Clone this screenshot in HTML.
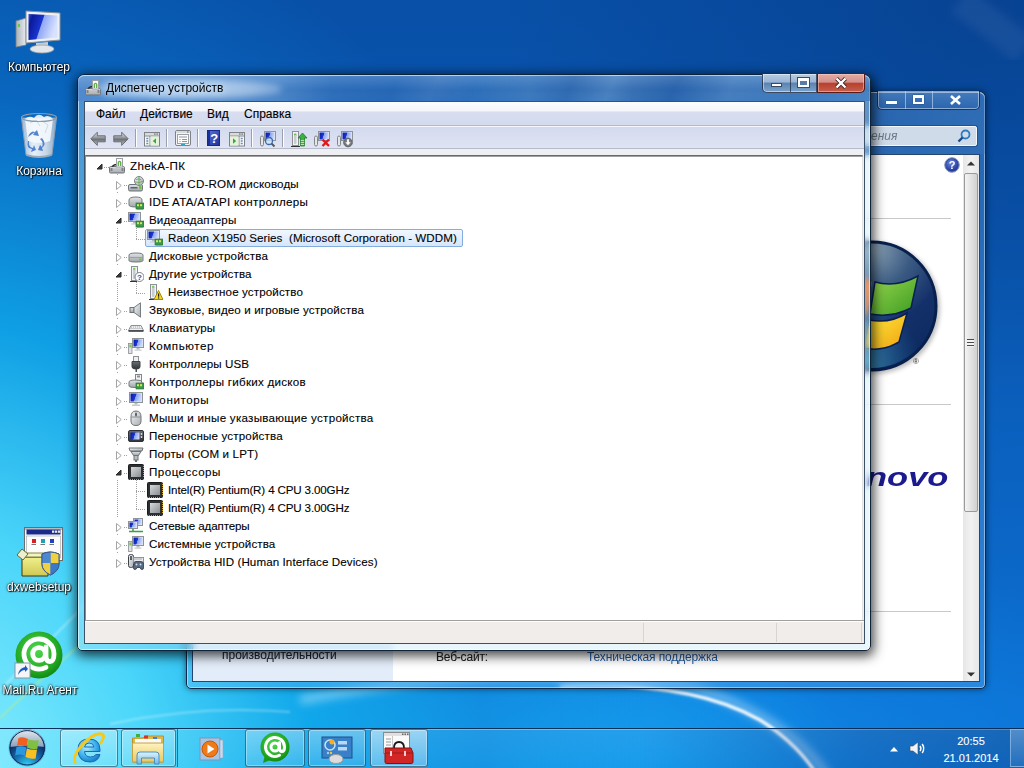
<!DOCTYPE html>
<html><head><meta charset="utf-8">
<style>
*{box-sizing:border-box;margin:0;padding:0}
html,body{width:1024px;height:768px;overflow:hidden}
body{position:relative;font-family:"Liberation Sans",sans-serif;font-size:12px;color:#000;background:#0a5ab8;}
.abs{position:absolute}
.ic{position:absolute;overflow:visible}
#bg{position:absolute;left:0;top:0;width:1024px;height:768px;
background:
 radial-gradient(ellipse 720px 960px at -60px 820px, rgba(150,242,255,1) 0%, rgba(75,215,250,0.98) 30%, rgba(15,168,234,0.88) 52%, rgba(10,125,212,0.45) 76%, rgba(10,110,210,0) 100%),
 radial-gradient(ellipse 600px 200px at 250px 740px, rgba(40,185,245,0.6) 0%, rgba(20,160,235,0) 100%),
 radial-gradient(ellipse 700px 260px at 520px 768px, rgba(15,160,242,0.95) 0%, rgba(15,135,230,0.6) 50%, rgba(20,110,220,0) 100%),
 radial-gradient(ellipse 500px 400px at 1000px 0px, rgba(6,50,120,0.45) 0%, rgba(6,50,120,0) 100%),
 linear-gradient(180deg,#0850a8 0%,#0956b0 30%,#0b62c0 60%,#0c72d6 100%);}
.dicon{position:absolute;width:80px;text-align:center;color:#fff;font-size:12px;line-height:14px;text-shadow:1px 1px 1px rgba(0,0,0,.9),0 0 2px #000,0 0 3px rgba(0,0,0,.6)}
.win{position:absolute}
.tt{position:absolute;font-size:11.6px;line-height:18px;white-space:nowrap;color:#000;-webkit-text-stroke:0.1px #000}
.menu{position:absolute;top:105px;font-size:12px;line-height:18px;color:#000;-webkit-text-stroke:0.1px #000}
.sel{position:absolute;border:1px solid #84acdd;border-radius:2px;background:linear-gradient(180deg,#f1f7fe 0%,#d5e6fb 100%)}
.hd{position:absolute;height:1px;background-image:linear-gradient(90deg,#a0a0a0 50%,transparent 50%);background-size:2px 1px}
.vd{position:absolute;width:1px;background-image:linear-gradient(180deg,#a0a0a0 50%,transparent 50%);background-size:1px 2px}
.tsep{position:absolute;top:129px;width:1px;height:18px;background:#9aa1ad;box-shadow:1px 0 0 #fff}
.tb{position:absolute;top:729px;height:38px;border:1px solid rgba(0,25,50,.5);border-radius:3px;background:linear-gradient(180deg,rgba(255,255,255,.32),rgba(255,255,255,.12));box-shadow:inset 0 0 0 1px rgba(255,255,255,.35)}
.tbtn{position:absolute;border:1px solid rgba(20,30,50,.75);border-top:none;box-shadow:inset 0 0 0 1px rgba(255,255,255,.45)}
</style></head>
<body>
<svg width="0" height="0" style="position:absolute"><defs>
<linearGradient id="gGray" x1="0" y1="0" x2="0" y2="1"><stop offset="0" stop-color="#e2e5e8"/><stop offset="1" stop-color="#9ea4a8"/></linearGradient>
<linearGradient id="gGray2" x1="0" y1="0" x2="1" y2="1"><stop offset="0" stop-color="#f4f5f6"/><stop offset="1" stop-color="#a8aeb2"/></linearGradient>
<linearGradient id="gDark" x1="0" y1="0" x2="0" y2="1"><stop offset="0" stop-color="#6a6f74"/><stop offset="1" stop-color="#2e3236"/></linearGradient>
<linearGradient id="gScreen" x1="0" y1="0" x2="1" y2="0.25"><stop offset="0" stop-color="#0a1a9a"/><stop offset="0.5" stop-color="#1838d8"/><stop offset="0.55" stop-color="#8aa0f0"/><stop offset="1" stop-color="#c8d6ff"/></linearGradient>
<linearGradient id="gCpu" x1="0" y1="0" x2="1" y2="1"><stop offset="0" stop-color="#d8dadc"/><stop offset="1" stop-color="#8a8e92"/></linearGradient>
<radialGradient id="gHelp" cx="0.4" cy="0.3" r="0.8"><stop offset="0" stop-color="#6a8ae0"/><stop offset="1" stop-color="#1a2a90"/></radialGradient>
<linearGradient id="gHelpSq" x1="0" y1="0" x2="1" y2="1"><stop offset="0" stop-color="#5a78d8"/><stop offset="1" stop-color="#1a2c98"/></linearGradient>
<linearGradient id="gArrow" x1="0" y1="0" x2="0" y2="1"><stop offset="0" stop-color="#e0e2e4"/><stop offset="0.35" stop-color="#a4a8ac"/><stop offset="0.55" stop-color="#6e7276"/><stop offset="1" stop-color="#c4c7ca"/></linearGradient>
</defs><symbol id="i-pc" viewBox="0 0 16 16"><rect x="0.5" y="8.5" width="15" height="6.5" rx="1.2" fill="url(#gGray)" stroke="#6f7478"/>
<rect x="2" y="10.5" width="12" height="2" fill="#b9bec2"/><rect x="1.5" y="10" width="2" height="3" fill="#7c8388"/><rect x="12.5" y="10" width="2" height="3" fill="#7c8388"/>
<path d="M3 8.5 Q7.5 4.5 12 8.5" fill="none" stroke="#2a2e33" stroke-width="1.3"/>
<rect x="7.5" y="0.5" width="6" height="8.5" fill="#fafafa" stroke="#9aa0a4"/><path d="M9.3 8 V4.3 Q10.5 2.3 11.7 4.3 V8" fill="none" stroke="#5ab040" stroke-width="1.3"/></symbol>
<symbol id="i-dvd" viewBox="0 0 16 16"><rect x="0.5" y="8.5" width="14" height="6.5" rx="1.5" fill="url(#gGray)" stroke="#6f7478"/>
<rect x="2.5" y="11" width="7" height="1.5" fill="#5b6166"/><rect x="11" y="10" width="2.5" height="3" fill="#6cc24a"/>
<circle cx="11" cy="5" r="4.5" fill="url(#gGray2)" stroke="#7b8287"/><path d="M8 3.5 Q11 2 13.5 4 M7 6 Q11 7 15 5.5 M11 0.8 V9" stroke="#5da64a" stroke-width="0.8" fill="none"/></symbol>
<symbol id="i-ide" viewBox="0 0 16 16"><path d="M1 6 Q1 3 8 3 Q14 3 14 6 V11 Q14 13 8 13 Q1 13 1 11 Z" fill="url(#gGray)" stroke="#747a7e"/>
<rect x="8" y="9" width="8" height="6" fill="#3b9a4a" stroke="#2a6a32" stroke-width="0.6"/><rect x="9" y="10.2" width="2" height="2" fill="#d9e65a"/><rect x="12" y="10.2" width="2" height="2" fill="#d9e65a"/><path d="M9 15.5H15" stroke="#c8a030"/></symbol>
<symbol id="i-video" viewBox="0 0 16 16"><rect x="0.5" y="0.5" width="12" height="9" fill="#e9ebee" stroke="#8d9397"/><rect x="1.5" y="1.5" width="10" height="7" fill="url(#gScreen)"/>
<rect x="5" y="10" width="3" height="1.5" fill="#b5babe"/><rect x="3" y="11.5" width="7" height="1" fill="#c6cacd"/>
<rect x="8" y="9" width="8" height="6" fill="#3b9a4a" stroke="#2a6a32" stroke-width="0.6"/><rect x="9" y="10.2" width="2" height="2" fill="#d9e65a"/><rect x="12" y="10.2" width="2" height="2" fill="#d9e65a"/><path d="M9 15.5H15" stroke="#c8a030"/></symbol>
<symbol id="i-disk" viewBox="0 0 16 16"><path d="M1 7 Q1 5 8 5 Q15 5 15 7 V12.5 Q15 14 8 14 Q1 14 1 12.5 Z" fill="url(#gGray)" stroke="#747a7e"/><path d="M2 9.5 H14" stroke="#9aa0a4"/><rect x="11" y="10.5" width="2.5" height="2" fill="#6cc24a"/></symbol>
<symbol id="i-other" viewBox="0 0 16 16"><rect x="3.5" y="0.5" width="6" height="14" fill="#f2f3f4" stroke="#8a9094"/><rect x="5" y="2" width="2.5" height="11" rx="1" fill="#c8ccd0"/><rect x="5.2" y="1.8" width="2" height="2" fill="#78c850"/><path d="M2 15.5H9" stroke="#333"/>
<circle cx="11.5" cy="11" r="4.5" fill="#fff" stroke="#7a8085"/><text x="11.5" y="14" font-size="8" font-weight="bold" text-anchor="middle" fill="#2a4aa8" font-family="Liberation Sans">?</text></symbol>
<symbol id="i-unknown" viewBox="0 0 16 16"><rect x="3.5" y="0.5" width="6" height="14" fill="#f2f3f4" stroke="#8a9094"/><rect x="5" y="2" width="2.5" height="11" rx="1" fill="#c8ccd0"/><rect x="5.2" y="1.8" width="2" height="2" fill="#78c850"/><path d="M2 15.5H9" stroke="#333"/>
<path d="M11.5 6.5 L16 15.5 H7 Z" fill="#f4d820" stroke="#a08a10" stroke-linejoin="round"/><rect x="11" y="9.5" width="1.2" height="3.2" fill="#222"/><rect x="11" y="13.4" width="1.2" height="1.2" fill="#222"/></symbol>
<symbol id="i-sound" viewBox="0 0 16 16"><rect x="2" y="5.5" width="4" height="5" fill="url(#gGray)" stroke="#6d7378"/><path d="M6 5.5 L12.5 0.8 V15.2 L6 10.5 Z" fill="url(#gGray2)" stroke="#777d82"/></symbol>
<symbol id="i-kbd" viewBox="0 0 16 16"><path d="M0.5 10.5 L3 5.5 H13 L15.5 10.5 Z" fill="#eef0f2" stroke="#8a9094"/><path d="M3 7 H13 M2.5 8.5 H13.5" stroke="#a0a6aa" stroke-dasharray="1 1"/><path d="M0.5 11 H15.5" stroke="#3a3e42" stroke-width="1.6"/></symbol>
<symbol id="i-comp" viewBox="0 0 16 16"><rect x="4.5" y="0.5" width="11" height="9" fill="#e9ebee" stroke="#8d9397"/><rect x="5.5" y="1.5" width="9" height="7" fill="url(#gScreen)"/>
<rect x="8.5" y="10" width="3" height="1.5" fill="#b5babe"/><rect x="6.5" y="11.5" width="7" height="1.2" fill="#c6cacd"/>
<rect x="0.5" y="5.5" width="3.5" height="10" fill="#dfe2e4" stroke="#8a9094" stroke-width="0.8"/><rect x="1.3" y="6.5" width="2" height="3" fill="#78c850"/></symbol>
<symbol id="i-usb" viewBox="0 0 16 16"><rect x="5.5" y="0.5" width="5" height="5" fill="#f0f0f0" stroke="#8a9094"/><path d="M4 5.5 H12 V11 Q12 13 8 13 Q4 13 4 11 Z" fill="url(#gDark)" stroke="#3e4246"/><rect x="7.5" y="13" width="1.5" height="3" fill="#4a4e52"/></symbol>
<symbol id="i-floppy" viewBox="0 0 16 16"><rect x="7.5" y="0.5" width="6" height="6" fill="#f4f4f4" stroke="#80868a"/><rect x="9" y="1.5" width="3" height="2" fill="#8a9094"/>
<path d="M1 8 Q1 6 8 6 Q14 6 14 8 V12 Q14 13.5 8 13.5 Q1 13.5 1 12 Z" fill="url(#gGray)" stroke="#747a7e"/>
<rect x="8" y="9" width="8" height="6" fill="#3b9a4a" stroke="#2a6a32" stroke-width="0.6"/><rect x="9" y="10.2" width="2" height="2" fill="#d9e65a"/><rect x="12" y="10.2" width="2" height="2" fill="#d9e65a"/></symbol>
<symbol id="i-monitor" viewBox="0 0 16 16"><rect x="1.5" y="0.5" width="13" height="10" fill="#e9ebee" stroke="#8d9397"/><rect x="2.5" y="1.5" width="11" height="8" fill="url(#gScreen)"/>
<rect x="6.5" y="11" width="3" height="1.5" fill="#b5babe"/><rect x="4" y="12.5" width="8" height="1.5" fill="#c6cacd"/></symbol>
<symbol id="i-mouse" viewBox="0 0 16 16"><path d="M8 1 Q13 1 13 7 V11 Q13 15.5 8 15.5 Q3 15.5 3 11 V7 Q3 1 8 1Z" fill="url(#gGray2)" stroke="#6f7478"/><path d="M8 1.5 V7 M3.5 7 H12.5" stroke="#7a8085" stroke-width="0.8"/><rect x="7" y="3" width="2" height="3" rx="1" fill="#5a6064"/></symbol>
<symbol id="i-portable" viewBox="0 0 16 16"><rect x="0.5" y="2.5" width="15" height="11" rx="1.5" fill="url(#gDark)" stroke="#2e3236"/><rect x="2.5" y="4.5" width="9" height="7" fill="url(#gScreen)"/><circle cx="13.5" cy="6" r="0.9" fill="#ddd"/><circle cx="13.5" cy="9" r="0.9" fill="#ddd"/></symbol>
<symbol id="i-ports" viewBox="0 0 16 16"><path d="M1 2 H15 L14 5 H2 Z" fill="url(#gGray2)" stroke="#6f7478"/><path d="M3 5.5 H13 L10.5 9.5 H5.5 Z" fill="url(#gGray)" stroke="#6f7478"/><rect x="6" y="9.5" width="4" height="4.5" fill="#b9bec2" stroke="#6f7478"/><rect x="7" y="14" width="2" height="2" fill="#6f7478"/></symbol>
<symbol id="i-cpu" viewBox="0 0 16 16"><rect x="0.5" y="0.5" width="15" height="15" rx="1" fill="#2d3033" stroke="#1a1c1e"/><rect x="3" y="3" width="10" height="10" fill="url(#gCpu)"/><path d="M15.5 2 V14 M2 15.5 H14" stroke="#d4a030" stroke-dasharray="1 1"/></symbol>
<symbol id="i-net" viewBox="0 0 16 16"><rect x="5.5" y="0.5" width="9" height="7" fill="#e9ebee" stroke="#8d9397"/><rect x="6.5" y="1.5" width="7" height="5" fill="url(#gScreen)"/>
<rect x="0.5" y="3.5" width="9" height="7" fill="#e9ebee" stroke="#8d9397"/><rect x="1.5" y="4.5" width="7" height="5" fill="url(#gScreen)"/>
<path d="M5 11 V13 M1 13.5 H15" stroke="#3aa040" stroke-width="1.5"/></symbol>
<symbol id="i-hid" viewBox="0 0 16 16"><rect x="0.5" y="0.5" width="5" height="13" rx="2" fill="url(#gGray2)" stroke="#3e4246"/><rect x="2" y="2" width="2" height="4" fill="#5a6064"/>
<rect x="5.5" y="3.5" width="10" height="6" fill="#e9ebee" stroke="#8d9397"/><path d="M6.5 5 H14.5" stroke="#6a7074" stroke-dasharray="1 1"/><path d="M6 9 Q6 7.5 8 7.5 H13 Q15.5 7.5 15.5 10 V14 Q15.5 15.5 14 15.5 Q12.5 15.5 12 13.5 H9 Q8.5 15.5 7 15.5 Q5.5 15.5 5.5 14Z" fill="#5a6a80" stroke="#2e3a4a" stroke-width="0.8"/><circle cx="8.5" cy="10.5" r="1" fill="#cfe0f0"/><circle cx="12.5" cy="10.5" r="1" fill="#cfe0f0"/></symbol></svg>
<div id="bg"></div>
<svg class="abs" style="left:0;top:0" width="1024" height="768" viewBox="0 0 1024 768">
 <defs><filter id="fb1" x="-20%" y="-20%" width="140%" height="140%"><feGaussianBlur stdDeviation="1.2"/></filter>
 <filter id="fb3" x="-20%" y="-20%" width="140%" height="140%"><feGaussianBlur stdDeviation="4"/></filter></defs>
 <path d="M300 700 Q560 650 700 690 Q790 720 830 780" fill="none" stroke="rgba(255,255,255,.35)" stroke-width="10" filter="url(#fb3)"/>
 <path d="M560 686 Q690 680 760 720 Q800 745 820 780" fill="none" stroke="rgba(255,255,255,.9)" stroke-width="3.5" filter="url(#fb1)"/>
 <path d="M0 690 Q40 650 90 600" fill="none" stroke="rgba(255,255,255,.35)" stroke-width="2" filter="url(#fb1)"/>
 <path d="M0 718 Q40 680 85 640" fill="none" stroke="rgba(190,240,120,.7)" stroke-width="1.5" filter="url(#fb1)"/>
 <path d="M110 724 Q200 705 290 712" fill="none" stroke="rgba(255,255,255,.3)" stroke-width="2" filter="url(#fb1)"/>
 <path d="M960 0 Q1000 30 1024 50" fill="none" stroke="rgba(255,255,255,.06)" stroke-width="30" filter="url(#fb3)"/>
</svg>

<!-- ============ BACK WINDOW ============ -->
<div class="win" style="left:186px;top:91px;width:800px;height:598px;border:1px solid #10284a;border-radius:7px 7px 5px 5px;
 background:rgba(130,190,245,.26);backdrop-filter:blur(4px);box-shadow:0 0 6px rgba(0,0,0,.55),inset 0 0 0 1px rgba(255,255,255,.45)"></div>
<div class="abs" style="left:187px;top:92px;width:798px;height:62px;border-radius:6px 6px 0 0;
 background:linear-gradient(100deg,rgba(30,80,150,.55) 0%,rgba(40,95,165,.45) 40%,rgba(70,130,200,.35) 55%,rgba(35,90,160,.5) 75%,rgba(60,120,190,.4) 100%);box-shadow:inset 0 1px 0 rgba(255,255,255,.5)"></div>
<!-- back title buttons -->
<div class="tbtn" style="left:877px;top:91px;width:103px;height:19px;border-radius:0 0 5px 5px;background:linear-gradient(180deg,rgba(120,160,210,.35),rgba(40,90,160,.3))"></div>
<div class="abs" style="left:905px;top:91px;width:1px;height:18px;background:rgba(200,220,245,.6)"></div>
<div class="abs" style="left:932px;top:91px;width:1px;height:18px;background:rgba(200,220,245,.6)"></div>
<div class="abs" style="left:886px;top:101px;width:11px;height:3px;background:#fff;box-shadow:0 0 1px #123"></div>
<div class="abs" style="left:913px;top:95px;width:11px;height:9px;border:2px solid #fff;border-top-width:3px;box-shadow:0 0 1px #123"></div>
<svg class="ic" style="left:949px;top:95px" width="13" height="10" viewBox="0 0 13 10"><path d="M2 1 L11 9 M11 1 L2 9" stroke="#fff" stroke-width="2.6"/></svg>
<!-- back search -->
<div class="abs" style="left:700px;top:126px;width:277px;height:20px;border:1px solid #f4f8fc;border-radius:2px;background:#cfdbe9;box-shadow:0 0 0 1px rgba(20,50,100,.45)"></div>
<div class="abs" style="left:871px;top:128px;font-style:italic;color:#6d7b8a;font-size:12px;line-height:16px">ения</div>
<svg class="ic" style="left:957px;top:129px" width="14" height="14" viewBox="0 0 14 14"><circle cx="8.5" cy="5.5" r="4" fill="none" stroke="#2c7cc0" stroke-width="1.8"/><path d="M5.5 8.5 L1.5 12.5" stroke="#1a4a8a" stroke-width="2.4"/></svg>
<!-- back client -->
<div class="abs" style="left:192px;top:154px;width:788px;height:528px;background:#fff;border:1px solid #264670"></div>
<div class="abs" style="left:193px;top:640px;width:200px;height:41px;background:#e3edf9"></div>
<div class="abs" style="left:222px;top:647px;font-size:12px;line-height:16px;color:#1a2238;-webkit-text-stroke:0.1px #1a2238">производительности</div>
<div class="abs" style="left:436px;top:649px;font-size:12px;line-height:16px;color:#1e1e1e;letter-spacing:-0.2px;-webkit-text-stroke:0.1px #1e1e1e">Веб-сайт:</div>
<div class="abs" style="left:587px;top:649px;font-size:12px;line-height:16px;color:#1e5aa2;letter-spacing:-0.14px">Техническая поддержка</div>
<div class="abs" style="left:860px;top:218px;width:91px;height:1px;background:#c8c8c8"></div>
<div class="abs" style="left:860px;top:404px;width:91px;height:1px;background:#c8c8c8"></div>
<div class="abs" style="left:860px;top:611px;width:91px;height:1px;background:#c8c8c8"></div>
<!-- help icon -->
<svg class="ic" style="left:944px;top:157px" width="16" height="16" viewBox="0 0 16 16"><circle cx="8" cy="8" r="7.3" fill="#2a48a8" stroke="#8a9ab8" stroke-width="1"/><circle cx="8" cy="8" r="6" fill="url(#gHelp)"/><text x="8" y="12.2" font-size="11" font-weight="bold" text-anchor="middle" fill="#fff" font-family="Liberation Sans">?</text></svg>
<!-- scrollbar -->
<div class="abs" style="left:963px;top:155px;width:16px;height:526px;background:linear-gradient(90deg,#e6e6e6,#f2f2f2 50%,#e6e6e6)"></div>
<div class="abs" style="left:964px;top:173px;width:14px;height:339px;border:1px solid #9a9a9a;border-radius:2px;background:linear-gradient(90deg,#f4f4f4 0%,#e2e2e2 50%,#d0d0d0 100%)"></div>
<svg class="ic" style="left:967px;top:161px" width="8" height="5" viewBox="0 0 8 5"><path d="M0 4.5 L4 0.5 L8 4.5Z" fill="#333"/></svg>
<svg class="ic" style="left:967px;top:672px" width="8" height="5" viewBox="0 0 8 5"><path d="M0 0.5 L4 4.5 L8 0.5Z" fill="#333"/></svg>
<div class="abs" style="left:967px;top:339px;width:7px;height:8px;background:repeating-linear-gradient(180deg,#4a4a4a 0 1.4px,#f4f4f4 1.4px 3px)"></div>
<!-- windows logo -->
<svg class="ic" style="left:800px;top:236px" width="145" height="140" viewBox="0 0 145 140">
 <defs><radialGradient id="gOrb" cx="0.5" cy="0.05" r="0.9"><stop offset="0" stop-color="#8aa2b4"/><stop offset="0.35" stop-color="#3a5a82"/><stop offset="0.65" stop-color="#14306a"/><stop offset="1" stop-color="#0c2a60"/></radialGradient>
 <radialGradient id="gOrb2" cx="0.3" cy="1" r="0.6"><stop offset="0" stop-color="#5ac0d8" stop-opacity=".95"/><stop offset="1" stop-color="#2a7ab0" stop-opacity="0"/></radialGradient>
 <linearGradient id="gGreen" x1="0" y1="0" x2="1" y2="1"><stop offset="0" stop-color="#9ad850"/><stop offset="1" stop-color="#3a9a20"/></linearGradient>
 <linearGradient id="gYel" x1="0" y1="0" x2="1" y2="1"><stop offset="0" stop-color="#fff040"/><stop offset="1" stop-color="#f0a010"/></linearGradient>
 <filter id="shd" x="-20%" y="-20%" width="140%" height="140%"><feGaussianBlur stdDeviation="2"/></filter></defs>
 <circle cx="74" cy="72" r="66" fill="rgba(0,0,0,.25)" filter="url(#shd)"/>
 <circle cx="72" cy="70" r="64" fill="url(#gOrb)" stroke="#08204e" stroke-width="3"/>
 <circle cx="72" cy="70" r="62" fill="url(#gOrb2)"/>
 <path d="M28 42 Q50 32 72 46 L67 80 Q48 68 24 76Z" fill="#f06a20"/>
 <path d="M75 46 Q96 52 118 40 L111 72 Q92 82 70 78 Z" fill="url(#gGreen)" stroke="#0a2050" stroke-width="1.5"/>
 <path d="M69 84 Q90 88 107 77 L99 106 Q82 116 64 112 Z" fill="url(#gYel)" stroke="#0a2050" stroke-width="1.5"/>
 <path d="M22 82 Q44 74 66 86 L60 114 Q40 104 18 112Z" fill="#2a8ad8"/>
 <text x="113" y="128" font-size="8" fill="#333" font-family="Liberation Sans">®</text>
</svg>
<div class="abs" style="left:866px;top:465px;font-family:'Liberation Sans';font-weight:bold;font-style:italic;font-size:25px;line-height:25px;color:#1b1a8e;transform:scaleX(1.38);transform-origin:0 0">novo</div>

<!-- ============ FRONT WINDOW ============ -->
<div class="win" style="left:77px;top:74px;width:794px;height:577px;border:1px solid #0e2238;border-radius:7px 7px 5px 5px;
 background:rgba(195,232,250,.36);backdrop-filter:blur(3px);box-shadow:1px 3px 12px 2px rgba(0,0,0,.72),inset 0 0 0 1px rgba(255,255,255,.6)"></div>
<div class="abs" style="left:78px;top:75px;width:792px;height:26px;border-radius:6px 6px 0 0;
 background:linear-gradient(180deg,rgba(255,255,255,.18) 0%,rgba(255,255,255,0) 60%),linear-gradient(90deg,rgba(80,135,205,.75) 0%,rgba(70,128,200,.72) 25%,rgba(30,98,182,.75) 32%,rgba(18,88,176,.8) 45%,rgba(50,120,195,.68) 57%,rgba(25,92,172,.78) 70%,rgba(60,122,195,.68) 100%);box-shadow:inset 0 1px 0 rgba(255,255,255,.55)"></div>
<div class="abs" style="left:78px;top:75px;width:792px;height:26px;border-radius:6px 6px 0 0;background:linear-gradient(112deg,rgba(0,0,0,0) 0%,rgba(0,0,0,0) 40%,rgba(255,255,255,.10) 45%,rgba(0,0,0,0) 50%,rgba(0,30,110,.14) 62%,rgba(255,255,255,.12) 67%,rgba(0,30,110,.12) 75%,rgba(255,255,255,.08) 82%,rgba(0,0,0,0) 90%)"></div>
<!-- title -->
<div class="abs" style="left:92px;top:78px;width:190px;height:22px;border-radius:50%;background:radial-gradient(ellipse at center,rgba(235,245,255,.75) 0%,rgba(220,235,250,.55) 50%,rgba(200,225,250,0) 100%);filter:blur(3px)"></div>
<svg class="ic" style="left:85px;top:80px" width="16" height="16" viewBox="0 0 16 16"><use href="#i-pc"/></svg>
<div class="abs" style="left:106px;top:81px;font-size:12px;line-height:14px;color:#000;text-shadow:0 0 6px #cfe2f4,0 0 10px #cfe2f4">Диспетчер устройств</div>
<!-- front buttons -->
<div class="tbtn" style="left:762px;top:74px;width:103px;height:19px;border-radius:0 0 5px 5px;background:linear-gradient(180deg,#b8cde4 0%,#9ab4d4 45%,#5a82b2 50%,#7aa4cc 100%)"></div>
<div class="abs" style="left:817px;top:74px;width:48px;height:19px;border:1px solid #5a1a18;border-top:none;border-radius:0 0 5px 0;background:linear-gradient(180deg,#e4aca4 0%,#d4908a 45%,#b8402e 52%,#c4604c 100%);box-shadow:inset 0 0 0 1px rgba(255,210,200,.5)"></div>
<div class="abs" style="left:790px;top:74px;width:1px;height:18px;background:rgba(30,40,60,.7)"></div>
<div class="abs" style="left:816px;top:74px;width:1px;height:18px;background:rgba(30,40,60,.7)"></div>
<div class="abs" style="left:771px;top:83px;width:11px;height:4px;background:#fff;border:1px solid #3a4a60"></div>
<div class="abs" style="left:798px;top:78px;width:11px;height:9px;background:#5a7aa8;border:2px solid #fff;border-top-width:3px;outline:1px solid #3a4a60"></div>
<svg class="ic" style="left:834px;top:77px" width="14" height="12" viewBox="0 0 14 12"><path d="M2.5 1.5 L11.5 10.5 M11.5 1.5 L2.5 10.5" stroke="#3a2020" stroke-width="4"/><path d="M2.5 1.5 L11.5 10.5 M11.5 1.5 L2.5 10.5" stroke="#fff" stroke-width="2.4"/></svg>

<!-- client -->
<div class="abs" style="left:84px;top:101px;width:781px;height:543px;background:#f0f0f0;border:1px solid #3c5068"></div>
<div class="abs" style="left:85px;top:102px;width:779px;height:24px;background:linear-gradient(180deg,#fbfcfd 0%,#f4f6fa 38%,#d8deef 44%,#d4dbee 100%);border-bottom:1px solid #b4bac8"></div>
<div class="menu" style="left:96px">Файл</div>
<div class="menu" style="left:140px">Действие</div>
<div class="menu" style="left:207px">Вид</div>
<div class="menu" style="left:244px">Справка</div>
<div class="abs" style="left:85px;top:126px;width:779px;height:23px;background:linear-gradient(180deg,#d4daee 0%,#dfe3f3 100%);border-top:1px solid #f4f6fa;border-bottom:1px solid #b4bac8"></div>
<div class="abs" style="left:85px;top:149px;width:779px;height:6px;background:#eeeff3"></div>
<!-- toolbar icons -->
<svg class="ic" style="left:90px;top:131px" width="16" height="16" viewBox="0 0 16 16"><path d="M0.8 7.8 L7.3 1.2 V4.8 H15.2 V10.8 H7.3 V14.4 Z" fill="url(#gArrow)" stroke="#6a6e72" stroke-linejoin="round"/></svg>
<svg class="ic" style="left:113px;top:131px" width="16" height="16" viewBox="0 0 16 16"><path d="M15.2 7.8 L8.7 1.2 V4.8 H0.8 V10.8 H8.7 V14.4 Z" fill="url(#gArrow)" stroke="#6a6e72" stroke-linejoin="round"/></svg>
<div class="tsep" style="left:135px"></div>
<svg class="ic" style="left:144px;top:132px" width="16" height="15" viewBox="0 0 16 15">
 <rect x="0.5" y="0.5" width="15" height="13.5" fill="#fafafa" stroke="#7e8286"/><rect x="1" y="1" width="14" height="2.5" fill="#d8dadc"/><rect x="10" y="1.3" width="1.6" height="1.6" fill="#8a8e92"/><rect x="12.4" y="1.3" width="1.6" height="1.6" fill="#8a8e92"/>
 <path d="M1 4 H15" stroke="#7e8286"/><path d="M6 4 V14" stroke="#7e8286"/>
 <rect x="6.5" y="4.5" width="8.5" height="9" fill="#e4f2dc"/>
 <path d="M2.3 6.5 H4.3 M2.3 9 H4.3 M2.3 11.5 H4.3" stroke="#6a8ab8" stroke-width="1.3"/>
 <path d="M8.8 9 L12 6.3 V11.7Z" fill="#3aa838"/>
</svg>
<div class="tsep" style="left:166px"></div>
<svg class="ic" style="left:175px;top:130px" width="16" height="16" viewBox="0 0 16 16">
 <rect x="0.5" y="0.5" width="15" height="15" rx="1.5" fill="#f4f4f4" stroke="#7e8286"/><rect x="1" y="1" width="14" height="2" fill="#d8dadc"/><rect x="12" y="1.2" width="1.6" height="1.6" fill="#8a8e92"/>
 <rect x="2.5" y="4.5" width="11" height="9" fill="#fdfdfd" stroke="#9aa0a4"/>
 <path d="M4 7 H12 M4.5 9.5 H5.5 M7 9.5 H12 M4.5 11.5 H5.5 M7 11.5 H12" stroke="#8a96a4"/>
 <rect x="6" y="14" width="4" height="2" fill="#30a8c0"/>
</svg>
<div class="tsep" style="left:197px"></div>
<svg class="ic" style="left:207px;top:130px" width="13" height="16" viewBox="0 0 13 16">
 <rect x="0" y="0" width="13" height="16" fill="url(#gHelpSq)"/><rect x="0" y="0" width="3" height="16" fill="#1a3098"/><rect x="0.5" y="0.5" width="12" height="15" fill="none" stroke="#142890"/>
 <text x="7.2" y="12.8" font-size="13" font-weight="bold" text-anchor="middle" fill="#fff" font-family="Liberation Sans">?</text>
</svg>
<svg class="ic" style="left:229px;top:132px" width="16" height="15" viewBox="0 0 16 15">
 <rect x="0.5" y="0.5" width="15" height="13.5" fill="#fafafa" stroke="#7e8286"/><rect x="1" y="1" width="14" height="2.5" fill="#d8dadc"/><rect x="10" y="1.3" width="1.6" height="1.6" fill="#8a8e92"/><rect x="12.4" y="1.3" width="1.6" height="1.6" fill="#8a8e92"/>
 <path d="M1 4 H15" stroke="#7e8286"/><path d="M10 4 V14" stroke="#7e8286"/>
 <rect x="1" y="4.5" width="8.5" height="9" fill="#e4f2dc"/>
 <path d="M11.7 6.5 H13.7 M11.7 9 H13.7 M11.7 11.5 H13.7" stroke="#6a8ab8" stroke-width="1.3"/>
 <path d="M7.2 9 L4 6.3 V11.7Z" fill="#3aa838"/>
</svg>
<div class="tsep" style="left:251px"></div>
<svg class="ic" style="left:260px;top:131px" width="16" height="16" viewBox="0 0 16 16"><rect x="0.5" y="5" width="3" height="10" rx="1.5" fill="#e4e6e8" stroke="#80868a"/><rect x="4.5" y="0.5" width="11" height="9" fill="#e9ebee" stroke="#8d9397"/><rect x="5.5" y="1.5" width="9" height="7" fill="url(#gScreen)"/><circle cx="9" cy="10" r="3.5" fill="rgba(200,230,255,.7)" stroke="#3a6aa8" stroke-width="1.3"/><path d="M11.5 12.5 L14.5 15.5" stroke="#555" stroke-width="1.8"/></svg>
<div class="tsep" style="left:282px"></div>
<svg class="ic" style="left:291px;top:131px" width="16" height="16" viewBox="0 0 16 16"><rect x="1.5" y="0.5" width="6" height="14" fill="#f2f3f4" stroke="#8a9094"/><rect x="3" y="2" width="2.5" height="11" rx="1" fill="#c8ccd0"/><path d="M0 15.5H9" stroke="#333"/><path d="M11.5 2 L16 7 H13.5 V15 H9.5 V7 H7Z" fill="#3cb040" stroke="#1e7a24" stroke-width="0.8"/><path d="M9.8 9.5 H13.2 M9.8 11.5 H13.2 M9.8 13.5 H13.2" stroke="#d8f4d0" stroke-width="0.8"/><path d="M3 4 Q4.2 2.5 5.5 4" stroke="#5ab040" fill="none"/></svg>
<svg class="ic" style="left:314px;top:131px" width="16" height="16" viewBox="0 0 16 16"><rect x="0.5" y="5" width="3" height="10" rx="1.5" fill="#e4e6e8" stroke="#80868a"/><rect x="4.5" y="0.5" width="11" height="9" fill="#e9ebee" stroke="#8d9397"/><rect x="5.5" y="1.5" width="9" height="7" fill="url(#gScreen)"/><path d="M8.5 8.5 L15 15 M15 8.5 L8.5 15" stroke="#e01818" stroke-width="2.4"/></svg>
<svg class="ic" style="left:337px;top:131px" width="16" height="16" viewBox="0 0 16 16"><rect x="0.5" y="5" width="3" height="10" rx="1.5" fill="#e4e6e8" stroke="#80868a"/><rect x="4.5" y="0.5" width="11" height="9" fill="#e9ebee" stroke="#8d9397"/><rect x="5.5" y="1.5" width="9" height="7" fill="url(#gScreen)"/><circle cx="11" cy="11.5" r="4.3" fill="#7a7e82" stroke="#5a5e62"/><path d="M11 8.3 V12.5" stroke="#fff" stroke-width="1.8"/><path d="M8.3 11.2 L11 14.3 L13.7 11.2Z" fill="#fff"/></svg>

<!-- tree area -->
<div class="abs" style="left:85px;top:155px;width:778px;height:466px;background:#fff;border-top:1px solid #6a6a6a;border-left:1px solid #8a8e94;border-right:1px solid #e2e2e2"></div>
<div class="abs" style="left:86px;top:156px;width:777px;height:1px;background:#a0a0a0"></div>
<div class="hd" style="left:104px;top:167px;width:5px"></div>
<div class="vd" style="left:117px;top:174px;height:389px"></div>
<div class="hd" style="left:124px;top:185px;width:4px"></div>
<div class="hd" style="left:124px;top:203px;width:4px"></div>
<div class="hd" style="left:124px;top:221px;width:4px"></div>
<div class="hd" style="left:136px;top:239px;width:10px"></div>
<div class="hd" style="left:124px;top:257px;width:4px"></div>
<div class="hd" style="left:124px;top:275px;width:4px"></div>
<div class="hd" style="left:136px;top:293px;width:10px"></div>
<div class="hd" style="left:124px;top:311px;width:4px"></div>
<div class="hd" style="left:124px;top:329px;width:4px"></div>
<div class="hd" style="left:124px;top:347px;width:4px"></div>
<div class="hd" style="left:124px;top:365px;width:4px"></div>
<div class="hd" style="left:124px;top:383px;width:4px"></div>
<div class="hd" style="left:124px;top:401px;width:4px"></div>
<div class="hd" style="left:124px;top:419px;width:4px"></div>
<div class="hd" style="left:124px;top:437px;width:4px"></div>
<div class="hd" style="left:124px;top:455px;width:4px"></div>
<div class="hd" style="left:124px;top:473px;width:4px"></div>
<div class="hd" style="left:136px;top:491px;width:10px"></div>
<div class="hd" style="left:136px;top:509px;width:10px"></div>
<div class="hd" style="left:124px;top:527px;width:4px"></div>
<div class="hd" style="left:124px;top:545px;width:4px"></div>
<div class="hd" style="left:124px;top:563px;width:4px"></div>
<div class="vd" style="left:136px;top:228px;height:11px"></div>
<div class="vd" style="left:136px;top:282px;height:11px"></div>
<div class="vd" style="left:136px;top:480px;height:29px"></div>
<svg class="ic" style="left:109px;top:158px" width="16" height="16" viewBox="0 0 16 16"><use href="#i-pc"/></svg>
<div class="tt" style="left:130px;top:157px;letter-spacing:0.371px">ZhekA-ПК</div>
<svg class="ic" style="left:96px;top:163px" width="7" height="7" viewBox="0 0 7 7"><path d="M6 1 V6 H1 Z" fill="#3a3a3a" stroke="#2a2a2a" stroke-linejoin="round"/></svg>
<svg class="ic" style="left:128px;top:176px" width="16" height="16" viewBox="0 0 16 16"><use href="#i-dvd"/></svg>
<div class="tt" style="left:149px;top:175px;letter-spacing:0.162px">DVD и CD-ROM дисководы</div>
<div class="abs" style="left:112px;top:176px;width:12px;height:16px;background:#fff"></div>
<svg class="ic" style="left:116px;top:181px" width="6" height="9" viewBox="0 0 6 9"><path d="M0.5 0.5 L5.2 4.5 L0.5 8.5 Z" fill="#fff" stroke="#a4a4a4"/></svg>
<svg class="ic" style="left:128px;top:194px" width="16" height="16" viewBox="0 0 16 16"><use href="#i-ide"/></svg>
<div class="tt" style="left:149px;top:193px;letter-spacing:0.296px">IDE ATA/ATAPI контроллеры</div>
<div class="abs" style="left:112px;top:194px;width:12px;height:16px;background:#fff"></div>
<svg class="ic" style="left:116px;top:199px" width="6" height="9" viewBox="0 0 6 9"><path d="M0.5 0.5 L5.2 4.5 L0.5 8.5 Z" fill="#fff" stroke="#a4a4a4"/></svg>
<svg class="ic" style="left:128px;top:212px" width="16" height="16" viewBox="0 0 16 16"><use href="#i-video"/></svg>
<div class="tt" style="left:149px;top:211px;letter-spacing:0.083px">Видеоадаптеры</div>
<div class="abs" style="left:112px;top:212px;width:12px;height:16px;background:#fff"></div>
<svg class="ic" style="left:115px;top:217px" width="7" height="7" viewBox="0 0 7 7"><path d="M6 1 V6 H1 Z" fill="#3a3a3a" stroke="#2a2a2a" stroke-linejoin="round"/></svg>
<div class="sel" style="left:145px;top:229px;width:318px;height:18px"></div>
<svg class="ic" style="left:147px;top:230px" width="16" height="16" viewBox="0 0 16 16"><use href="#i-video"/></svg>
<div class="tt" style="left:168px;top:229px;letter-spacing:0.054px">Radeon X1950 Series&nbsp; (Microsoft Corporation - WDDM)</div>
<svg class="ic" style="left:128px;top:248px" width="16" height="16" viewBox="0 0 16 16"><use href="#i-disk"/></svg>
<div class="tt" style="left:149px;top:247px;letter-spacing:0.183px">Дисковые устройства</div>
<div class="abs" style="left:112px;top:248px;width:12px;height:16px;background:#fff"></div>
<svg class="ic" style="left:116px;top:253px" width="6" height="9" viewBox="0 0 6 9"><path d="M0.5 0.5 L5.2 4.5 L0.5 8.5 Z" fill="#fff" stroke="#a4a4a4"/></svg>
<svg class="ic" style="left:128px;top:266px" width="16" height="16" viewBox="0 0 16 16"><use href="#i-other"/></svg>
<div class="tt" style="left:149px;top:265px;letter-spacing:0.156px">Другие устройства</div>
<div class="abs" style="left:112px;top:266px;width:12px;height:16px;background:#fff"></div>
<svg class="ic" style="left:115px;top:271px" width="7" height="7" viewBox="0 0 7 7"><path d="M6 1 V6 H1 Z" fill="#3a3a3a" stroke="#2a2a2a" stroke-linejoin="round"/></svg>
<svg class="ic" style="left:147px;top:284px" width="16" height="16" viewBox="0 0 16 16"><use href="#i-unknown"/></svg>
<div class="tt" style="left:168px;top:283px;letter-spacing:0.114px">Неизвестное устройство</div>
<svg class="ic" style="left:128px;top:302px" width="16" height="16" viewBox="0 0 16 16"><use href="#i-sound"/></svg>
<div class="tt" style="left:149px;top:301px;letter-spacing:0.126px">Звуковые, видео и игровые устройства</div>
<div class="abs" style="left:112px;top:302px;width:12px;height:16px;background:#fff"></div>
<svg class="ic" style="left:116px;top:307px" width="6" height="9" viewBox="0 0 6 9"><path d="M0.5 0.5 L5.2 4.5 L0.5 8.5 Z" fill="#fff" stroke="#a4a4a4"/></svg>
<svg class="ic" style="left:128px;top:320px" width="16" height="16" viewBox="0 0 16 16"><use href="#i-kbd"/></svg>
<div class="tt" style="left:149px;top:319px;letter-spacing:0.167px">Клавиатуры</div>
<div class="abs" style="left:112px;top:320px;width:12px;height:16px;background:#fff"></div>
<svg class="ic" style="left:116px;top:325px" width="6" height="9" viewBox="0 0 6 9"><path d="M0.5 0.5 L5.2 4.5 L0.5 8.5 Z" fill="#fff" stroke="#a4a4a4"/></svg>
<svg class="ic" style="left:128px;top:338px" width="16" height="16" viewBox="0 0 16 16"><use href="#i-comp"/></svg>
<div class="tt" style="left:149px;top:337px;letter-spacing:0.562px">Компьютер</div>
<div class="abs" style="left:112px;top:338px;width:12px;height:16px;background:#fff"></div>
<svg class="ic" style="left:116px;top:343px" width="6" height="9" viewBox="0 0 6 9"><path d="M0.5 0.5 L5.2 4.5 L0.5 8.5 Z" fill="#fff" stroke="#a4a4a4"/></svg>
<svg class="ic" style="left:128px;top:356px" width="16" height="16" viewBox="0 0 16 16"><use href="#i-usb"/></svg>
<div class="tt" style="left:149px;top:355px;letter-spacing:0.036px">Контроллеры USB</div>
<div class="abs" style="left:112px;top:356px;width:12px;height:16px;background:#fff"></div>
<svg class="ic" style="left:116px;top:361px" width="6" height="9" viewBox="0 0 6 9"><path d="M0.5 0.5 L5.2 4.5 L0.5 8.5 Z" fill="#fff" stroke="#a4a4a4"/></svg>
<svg class="ic" style="left:128px;top:374px" width="16" height="16" viewBox="0 0 16 16"><use href="#i-floppy"/></svg>
<div class="tt" style="left:149px;top:373px;letter-spacing:0.267px">Контроллеры гибких дисков</div>
<div class="abs" style="left:112px;top:374px;width:12px;height:16px;background:#fff"></div>
<svg class="ic" style="left:116px;top:379px" width="6" height="9" viewBox="0 0 6 9"><path d="M0.5 0.5 L5.2 4.5 L0.5 8.5 Z" fill="#fff" stroke="#a4a4a4"/></svg>
<svg class="ic" style="left:128px;top:392px" width="16" height="16" viewBox="0 0 16 16"><use href="#i-monitor"/></svg>
<div class="tt" style="left:149px;top:391px;letter-spacing:0.586px">Мониторы</div>
<div class="abs" style="left:112px;top:392px;width:12px;height:16px;background:#fff"></div>
<svg class="ic" style="left:116px;top:397px" width="6" height="9" viewBox="0 0 6 9"><path d="M0.5 0.5 L5.2 4.5 L0.5 8.5 Z" fill="#fff" stroke="#a4a4a4"/></svg>
<svg class="ic" style="left:128px;top:410px" width="16" height="16" viewBox="0 0 16 16"><use href="#i-mouse"/></svg>
<div class="tt" style="left:149px;top:409px;letter-spacing:0.273px">Мыши и иные указывающие устройства</div>
<div class="abs" style="left:112px;top:410px;width:12px;height:16px;background:#fff"></div>
<svg class="ic" style="left:116px;top:415px" width="6" height="9" viewBox="0 0 6 9"><path d="M0.5 0.5 L5.2 4.5 L0.5 8.5 Z" fill="#fff" stroke="#a4a4a4"/></svg>
<svg class="ic" style="left:128px;top:428px" width="16" height="16" viewBox="0 0 16 16"><use href="#i-portable"/></svg>
<div class="tt" style="left:149px;top:427px;letter-spacing:0.16px">Переносные устройства</div>
<div class="abs" style="left:112px;top:428px;width:12px;height:16px;background:#fff"></div>
<svg class="ic" style="left:116px;top:433px" width="6" height="9" viewBox="0 0 6 9"><path d="M0.5 0.5 L5.2 4.5 L0.5 8.5 Z" fill="#fff" stroke="#a4a4a4"/></svg>
<svg class="ic" style="left:128px;top:446px" width="16" height="16" viewBox="0 0 16 16"><use href="#i-ports"/></svg>
<div class="tt" style="left:149px;top:445px;letter-spacing:0.144px">Порты (COM и LPT)</div>
<div class="abs" style="left:112px;top:446px;width:12px;height:16px;background:#fff"></div>
<svg class="ic" style="left:116px;top:451px" width="6" height="9" viewBox="0 0 6 9"><path d="M0.5 0.5 L5.2 4.5 L0.5 8.5 Z" fill="#fff" stroke="#a4a4a4"/></svg>
<svg class="ic" style="left:128px;top:464px" width="16" height="16" viewBox="0 0 16 16"><use href="#i-cpu"/></svg>
<div class="tt" style="left:149px;top:463px;letter-spacing:0.467px">Процессоры</div>
<div class="abs" style="left:112px;top:464px;width:12px;height:16px;background:#fff"></div>
<svg class="ic" style="left:115px;top:469px" width="7" height="7" viewBox="0 0 7 7"><path d="M6 1 V6 H1 Z" fill="#3a3a3a" stroke="#2a2a2a" stroke-linejoin="round"/></svg>
<svg class="ic" style="left:147px;top:482px" width="16" height="16" viewBox="0 0 16 16"><use href="#i-cpu"/></svg>
<div class="tt" style="left:168px;top:481px;letter-spacing:-0.147px">Intel(R) Pentium(R) 4 CPU 3.00GHz</div>
<svg class="ic" style="left:147px;top:500px" width="16" height="16" viewBox="0 0 16 16"><use href="#i-cpu"/></svg>
<div class="tt" style="left:168px;top:499px;letter-spacing:-0.147px">Intel(R) Pentium(R) 4 CPU 3.00GHz</div>
<svg class="ic" style="left:128px;top:518px" width="16" height="16" viewBox="0 0 16 16"><use href="#i-net"/></svg>
<div class="tt" style="left:149px;top:517px;letter-spacing:-0.127px">Сетевые адаптеры</div>
<div class="abs" style="left:112px;top:518px;width:12px;height:16px;background:#fff"></div>
<svg class="ic" style="left:116px;top:523px" width="6" height="9" viewBox="0 0 6 9"><path d="M0.5 0.5 L5.2 4.5 L0.5 8.5 Z" fill="#fff" stroke="#a4a4a4"/></svg>
<svg class="ic" style="left:128px;top:536px" width="16" height="16" viewBox="0 0 16 16"><use href="#i-comp"/></svg>
<div class="tt" style="left:149px;top:535px;letter-spacing:0.1px">Системные устройства</div>
<div class="abs" style="left:112px;top:536px;width:12px;height:16px;background:#fff"></div>
<svg class="ic" style="left:116px;top:541px" width="6" height="9" viewBox="0 0 6 9"><path d="M0.5 0.5 L5.2 4.5 L0.5 8.5 Z" fill="#fff" stroke="#a4a4a4"/></svg>
<svg class="ic" style="left:128px;top:554px" width="16" height="16" viewBox="0 0 16 16"><use href="#i-hid"/></svg>
<div class="tt" style="left:149px;top:553px;letter-spacing:0.092px">Устройства HID (Human Interface Devices)</div>
<div class="abs" style="left:112px;top:554px;width:12px;height:16px;background:#fff"></div>
<svg class="ic" style="left:116px;top:559px" width="6" height="9" viewBox="0 0 6 9"><path d="M0.5 0.5 L5.2 4.5 L0.5 8.5 Z" fill="#fff" stroke="#a4a4a4"/></svg>
<!-- status bar -->
<div class="abs" style="left:85px;top:620px;width:779px;height:1px;background:#a0a0a0"></div>
<div class="abs" style="left:85px;top:621px;width:779px;height:22px;background:#f0edea;border-top:1px solid #fdfdfd"></div>
<div class="abs" style="left:643px;top:623px;width:1px;height:19px;background:#d8d4d0"></div>
<div class="abs" style="left:776px;top:623px;width:1px;height:19px;background:#d8d4d0"></div>
<div class="abs" style="left:861px;top:623px;width:1px;height:19px;background:#d8d4d0"></div>

<!-- ============ DESKTOP ICONS ============ -->
<!-- desktop icon graphics -->
<svg class="ic" style="left:14px;top:9px" width="50" height="46" viewBox="0 0 50 46">
 <defs><linearGradient id="dScr" x1="0" y1="0" x2="1" y2="0.3"><stop offset="0" stop-color="#3a50c8"/><stop offset="0.15" stop-color="#0a1a9a"/><stop offset="0.5" stop-color="#1a34d0"/><stop offset="0.53" stop-color="#90a8f4"/><stop offset="1" stop-color="#d8e2ff"/></linearGradient>
 <linearGradient id="dTow" x1="0" y1="0" x2="1" y2="0"><stop offset="0" stop-color="#a8b0b8"/><stop offset="1" stop-color="#e8ecf0"/></linearGradient></defs>
 <path d="M2 12 L12 9 V36 L2 38 Z" fill="url(#dTow)" stroke="#7a8288" stroke-width="0.8"/>
 <rect x="4" y="15" width="2" height="3" fill="#6cc24a"/>
 <path d="M12 2 L46 4 V31 L12 34 Z" fill="#eef1f4" stroke="#8a9298"/>
 <path d="M14.5 5 L43.5 6.5 V28.5 L14.5 31 Z" fill="url(#dScr)"/>
 <path d="M22 34 L34 33 V37 L22 38Z" fill="#c8cdd2"/>
 <ellipse cx="28" cy="40" rx="12" ry="4" fill="#e2e6ea" stroke="#9aa2a8" stroke-width="0.8"/>
</svg>
<svg class="ic" style="left:20px;top:111px" width="38" height="48" viewBox="0 0 38 48">
 <defs><linearGradient id="dBin" x1="0" y1="0" x2="1" y2="0"><stop offset="0" stop-color="#9ab8d8"/><stop offset="0.35" stop-color="#e8f0f8"/><stop offset="0.7" stop-color="#c8d8e8"/><stop offset="1" stop-color="#8aa8c8"/></linearGradient></defs>
 <path d="M1.5 7 L36.5 7 L32 44 Q19 48 6 44 Z" fill="url(#dBin)" stroke="#8a9cb0" stroke-width="1"/>
 <path d="M5 8 Q9 4 14 7 Q18 1 24 6 Q29 3 33 8 L30 30 Q20 34 8 30Z" fill="#f4f8fc" opacity=".9"/>
 <path d="M10 12 L16 9 L20 15 M22 10 L28 14 L25 22 M12 20 L18 24" stroke="#d0dae4" stroke-width="1" fill="none"/>
 <ellipse cx="19" cy="6.5" rx="17.5" ry="4" fill="none" stroke="#8a9cb0" stroke-width="1.2"/>
 <path d="M8 26 Q10 20 15 21 L13 24 L19 25 L17 19 L15 21" fill="#3a70c8" opacity=".85"/>
 <path d="M9 30 Q8 36 13 37 L14 34 L16 39 L11 41 L12 38 Q6 37 8 30Z" fill="#3a70c8" opacity=".85"/>
 <path d="M20 28 Q24 31 22 36 L20 34 L18 39 L23 40 L22 37 Q27 33 22 27Z" fill="#3a70c8" opacity=".85"/>
 <path d="M6 43 Q19 47 32 43 L31.5 45 Q19 49 6.5 45Z" fill="#9aa8b8"/>
</svg>
<svg class="ic" style="left:14px;top:526px" width="50" height="50" viewBox="0 0 50 50">
 <defs><linearGradient id="boxG" x1="0" y1="0" x2="0" y2="1"><stop offset="0" stop-color="#f0f090"/><stop offset="1" stop-color="#d0c850"/></linearGradient></defs>
 <rect x="10.5" y="1.5" width="38" height="33" fill="#f8f8f8" stroke="#6a6e74"/>
 <rect x="11" y="2" width="37" height="2" fill="#b8bcc0"/>
 <rect x="12.5" y="3.5" width="34" height="5" fill="#1a2a8a"/>
 <rect x="38" y="4.5" width="2.3" height="2.3" fill="#e8e8e8"/><rect x="41" y="4.5" width="2.3" height="2.3" fill="#e8e8e8"/><rect x="44" y="4.5" width="2.3" height="2.3" fill="#e8e8e8"/>
 <rect x="12.5" y="10" width="34" height="22" fill="#fcfcfc" stroke="#9aa0a6" stroke-width=".6"/>
 <rect x="18" y="13" width="4" height="4" fill="#d82020"/><rect x="27" y="13" width="4" height="4" fill="#20a0b0"/><rect x="36" y="13" width="4" height="4" fill="#2040c0"/>
 <path d="M17.5 18.5 H22 M26.5 18.5 H31 M35.5 18.5 H40" stroke="#555" stroke-width=".8"/>
 <path d="M8 31 L34 31 L34 50 L8 50Z" fill="url(#boxG)" stroke="#3a3a10"/>
 <path d="M9 31 L13 27 L34 27 L33 31Z" fill="#f4f4c0" stroke="#6a6a20" stroke-width=".8"/>
 <path d="M3 29 L8 23 L14 28 L9 34Z" fill="#eeeed0" stroke="#6a6a20"/>
 <path d="M28 28 Q36 24 45 28 V38 Q45 45 36.5 49 Q28 45 28 38Z" fill="#4a88d0" stroke="#3a5a90"/>
 <path d="M36.5 26 V49 Q28 45 28 38 V37 H36.5Z" fill="#f0d040"/><path d="M36.5 37 H45 V38 Q45 45 36.5 49Z" fill="#3a78c8"/><path d="M36.5 26 Q40 26 45 28 V37 H36.5Z" fill="#f0d040"/><path d="M28 28 Q32 26 36.5 26 V37 H28Z" fill="#4a88d0"/>
 <path d="M28 28 Q36 24 45 28 V38 Q45 45 36.5 49 Q28 45 28 38Z" fill="none" stroke="#3a5a90"/>
</svg>
<svg class="ic" style="left:14px;top:632px" width="50" height="48" viewBox="0 0 50 48">
 <defs><radialGradient id="dMail" cx="0.45" cy="0.4" r="0.65"><stop offset="0" stop-color="#50d850"/><stop offset="0.7" stop-color="#22a822"/><stop offset="1" stop-color="#0e800e"/></radialGradient></defs>
 <circle cx="25" cy="23" r="23.5" fill="url(#dMail)"/>
 <g fill="none" stroke="#fff" stroke-width="4.8" stroke-linecap="round">
 <circle cx="25" cy="22" r="6.3"/>
 <path d="M32 15 V24 Q32 29.5 36 29.5 Q40 29.5 40 22 A15 15 0 1 0 32 35.3"/>
 </g>
 <rect x="1" y="31" width="15" height="15" fill="#f4f6f8" stroke="#8a96a4"/>
 <path d="M4 43 Q5 36 11 35 V33 L14 37 L11 40 V38 Q7 38 4 43Z" fill="#1a5ac8"/>
</svg>

<div class="dicon" style="left:-1px;top:60px">Компьютер</div>
<div class="dicon" style="left:-1px;top:164px">Корзина</div>
<div class="dicon" style="left:-1px;top:580px">dxwebsetup</div>
<div class="dicon" style="left:0px;top:683px">Mail.Ru Агент</div>

<!-- ============ TASKBAR ============ -->
<div class="abs" style="left:0;top:728px;width:1024px;height:40px;background:linear-gradient(180deg,rgba(255,255,255,.07) 0%,rgba(255,255,255,.02) 100%);border-top:1px solid #08325a;box-shadow:inset 0 1px 0 rgba(150,215,255,.6)"></div>
<!-- taskbar items -->
<div class="abs" style="left:640px;top:728px;width:384px;height:40px;background:linear-gradient(90deg,rgba(10,40,100,0) 0%,rgba(10,40,100,.22) 60%,rgba(10,40,100,.3) 100%)"></div>
<svg class="ic" style="left:7px;top:728px" width="40" height="40" viewBox="0 0 40 40">
 <defs><linearGradient id="orbTop" x1="0" y1="0" x2="0" y2="1"><stop offset="0" stop-color="#e4eaf0"/><stop offset="1" stop-color="#8aa2b8"/></linearGradient>
 <radialGradient id="orbBot" cx="0.5" cy="1" r="0.7"><stop offset="0" stop-color="#30d8f8"/><stop offset="0.5" stop-color="#1a70b0"/><stop offset="1" stop-color="#0a2c68"/></radialGradient></defs>
 <circle cx="20.2" cy="19.8" r="18.2" fill="url(#orbBot)" stroke="#62b8e0" stroke-width="1"/>
 <path d="M3 19 A17.2 17.2 0 0 1 37.4 19 Q20 16 3 19Z" fill="url(#orbTop)"/>
 <circle cx="20.2" cy="19.8" r="17.2" fill="none" stroke="#0a2a58" stroke-width="1"/>
 <path d="M11.5 10 Q16 8 21 11 L19.5 18.5 Q15 16 10 18Z" fill="#f06020"/>
 <path d="M21.5 11.2 Q26 13.5 31.8 12 L30.3 20.8 Q25 22 20 19.5Z" fill="#80c040"/>
 <path d="M9.5 19 Q14 17.2 19.2 19.5 L17.8 27.8 Q13 25.5 8.2 27.5Z" fill="#2a98e0"/>
 <path d="M19.8 20.5 Q25 22.5 30 21.5 L28.6 30.5 Q23 31.5 18.4 29Z" fill="#f8c020"/>
</svg>
<div class="tb" style="left:60px;width:58px"></div>
<div class="tb" style="left:121px;width:55px"></div>
<div class="abs" style="left:177px;top:729px;width:1px;height:38px;background:rgba(0,20,40,.5)"></div>
<div class="tb" style="left:245px;width:60px"></div>
<div class="tb" style="left:308px;width:58px"></div>
<div class="tb" style="left:370px;width:58px;background:linear-gradient(180deg,rgba(255,255,255,.55),rgba(255,255,255,.3))"></div>
<svg class="ic" style="left:72px;top:732px" width="34" height="34" viewBox="0 0 34 34">
 <defs><radialGradient id="ieB" cx="0.4" cy="0.35" r="0.7"><stop offset="0" stop-color="#b8ecfc"/><stop offset="0.6" stop-color="#3ab0ec"/><stop offset="1" stop-color="#1878c8"/></radialGradient></defs>
 <path d="M6 17.5 Q6 7 17 7 Q28 7 28 18 V19.5 H12.5 Q13 25 18.5 25 Q22 25 24 22.5 H28 Q26 30 18 30 Q6 30 6 17.5Z M12.5 15 H22 Q21.5 11 17.2 11 Q13 11 12.5 15Z" fill="url(#ieB)" stroke="#1a68b0" stroke-width="1" fill-rule="evenodd"/>
 <path d="M4 31 Q-1 26 10 13 Q22 0 30 2 Q34 4 28 12" fill="none" stroke="#f8c818" stroke-width="2.8"/>
</svg>
<svg class="ic" style="left:131px;top:733px" width="34" height="32" viewBox="0 0 34 32">
 <defs><linearGradient id="fold" x1="0" y1="0" x2="0" y2="1"><stop offset="0" stop-color="#fff4c0"/><stop offset="1" stop-color="#e8c860"/></linearGradient>
 <linearGradient id="stand" x1="0" y1="0" x2="0" y2="1"><stop offset="0" stop-color="#e0f4fc"/><stop offset="1" stop-color="#70b8e8"/></linearGradient></defs>
 <path d="M1.5 5 H12 L14 3 H32.5 V29 H1.5Z" fill="#e0b850" stroke="#b89030"/>
 <rect x="5" y="1" width="4" height="3" fill="#3ab040"/><rect x="13" y="2.5" width="4" height="3" fill="#d83030"/><rect x="22" y="4" width="4" height="3" fill="#3a80d8"/>
 <rect x="4" y="6" width="26" height="4" fill="#fafafa"/>
 <path d="M1.5 10 H32.5 V29 H1.5Z" fill="url(#fold)" stroke="#c8a040"/>
 <path d="M6 31 V22 Q6 19 9 19 H25 Q28 19 28 22 V31 H23.5 V25 H10.5 V31Z" fill="url(#stand)" stroke="#4a90c8"/>
</svg>
<svg class="ic" style="left:199px;top:737px" width="26" height="24" viewBox="0 0 26 24">
 <rect x="1" y="1" width="20" height="22" fill="#a8c4e0" stroke="#7a98b8"/><rect x="21" y="3" width="3" height="18" fill="#c8dcf0" stroke="#8aa8c8" stroke-width=".6"/>
 <circle cx="11" cy="12" r="8" fill="#f07a18" stroke="#c85808"/>
 <path d="M8.5 7.5 L15.5 12 L8.5 16.5Z" fill="#fff"/>
</svg>
<svg class="ic" style="left:259px;top:732px" width="32" height="32" viewBox="0 0 32 32">
 <defs><radialGradient id="tMail" cx="0.45" cy="0.4" r="0.65"><stop offset="0" stop-color="#50d850"/><stop offset="0.7" stop-color="#22a822"/><stop offset="1" stop-color="#0e800e"/></radialGradient></defs>
 <path d="M6 23 L4 31 L14 27Z" fill="#1a9a1a"/>
 <circle cx="16" cy="15" r="14.5" fill="url(#tMail)"/>
 <g fill="none" stroke="#fff" stroke-width="3" stroke-linecap="round">
 <circle cx="16" cy="15" r="4"/>
 <path d="M20.5 10.5 V16 Q20.5 19.5 23 19.5 Q25.5 19.5 25.5 15 A9.5 9.5 0 1 0 20.5 23.3"/>
 </g>
</svg>
<svg class="ic" style="left:321px;top:736px" width="32" height="28" viewBox="0 0 32 28">
 <rect x="1" y="1" width="30" height="21" fill="#3a80c8" stroke="#1a5090"/>
 <circle cx="9" cy="9" r="5" fill="none" stroke="#c8e4f8" stroke-width="1.5"/><circle cx="11" cy="6" r="2.5" fill="#f4b020"/>
 <rect x="17" y="5" width="9" height="3.5" fill="#b8d8f4"/><rect x="17" y="11" width="9" height="3.5" fill="#b8d8f4"/>
 <circle cx="7" cy="17" r="1.2" fill="#9ad0f8"/><circle cx="10" cy="17" r="1.2" fill="#f4c040"/>
 <ellipse cx="15" cy="23" rx="7" ry="4.5" fill="#dcdcdc" stroke="#9a9a9a"/>
</svg>
<svg class="ic" style="left:382px;top:731px" width="32" height="34" viewBox="0 0 32 34">
 <rect x="1.5" y="1.5" width="26" height="21" fill="#fafafa" stroke="#8a8a8a"/><rect x="2" y="2" width="25" height="3" fill="#e0e0e0"/>
 <rect x="20" y="2.5" width="1.5" height="1.5" fill="#666"/><rect x="22.5" y="2.5" width="1.5" height="1.5" fill="#666"/><rect x="25" y="2.5" width="1.5" height="1.5" fill="#666"/>
 <path d="M4 8 H9 M4 11 H9 M4 14 H9" stroke="#9a9a9a"/><path d="M10.5 5 V22" stroke="#c8c8c8"/>
 <path d="M12 17 Q12 11 17 11 Q22 11 22 17" fill="none" stroke="#1a1a1a" stroke-width="1.8"/>
 <path d="M3 17 H29 L31 22 V31 Q31 32.5 29 32.5 H5 Q3 32.5 3 31Z" fill="#d22626" stroke="#8a1010"/>
 <path d="M3.5 22 H30.5" stroke="#a01818"/><rect x="8" y="20" width="2" height="5" fill="#f4d0d0"/><rect x="22" y="20" width="2" height="5" fill="#f4d0d0"/>
</svg>
<svg class="ic" style="left:890px;top:746px" width="8" height="6" viewBox="0 0 8 6"><path d="M0 5.5 L4 1 L8 5.5Z" fill="#fff"/></svg>
<svg class="ic" style="left:909px;top:741px" width="17" height="15" viewBox="0 0 17 15">
 <path d="M1 5 H4 L9 1 V14 L4 10 H1Z" fill="#f0f4f8" stroke="#3a4a60" stroke-width=".6"/>
 <path d="M11 5 Q12.8 7.5 11 10 M13.2 3 Q16.2 7.5 13.2 12" fill="none" stroke="#fff" stroke-width="1.5"/>
</svg>
<div class="abs" style="left:1010px;top:729px;width:14px;height:38px;border:1px solid rgba(160,200,240,.6);border-right:none;background:linear-gradient(180deg,rgba(255,255,255,.25),rgba(255,255,255,.08))"></div>
<div class="abs" style="left:940px;top:733px;width:62px;text-align:center;color:#fff;font-size:11px;line-height:17px;-webkit-text-stroke:0.1px #fff">20:55<br>21.01.2014</div>

</body></html>
